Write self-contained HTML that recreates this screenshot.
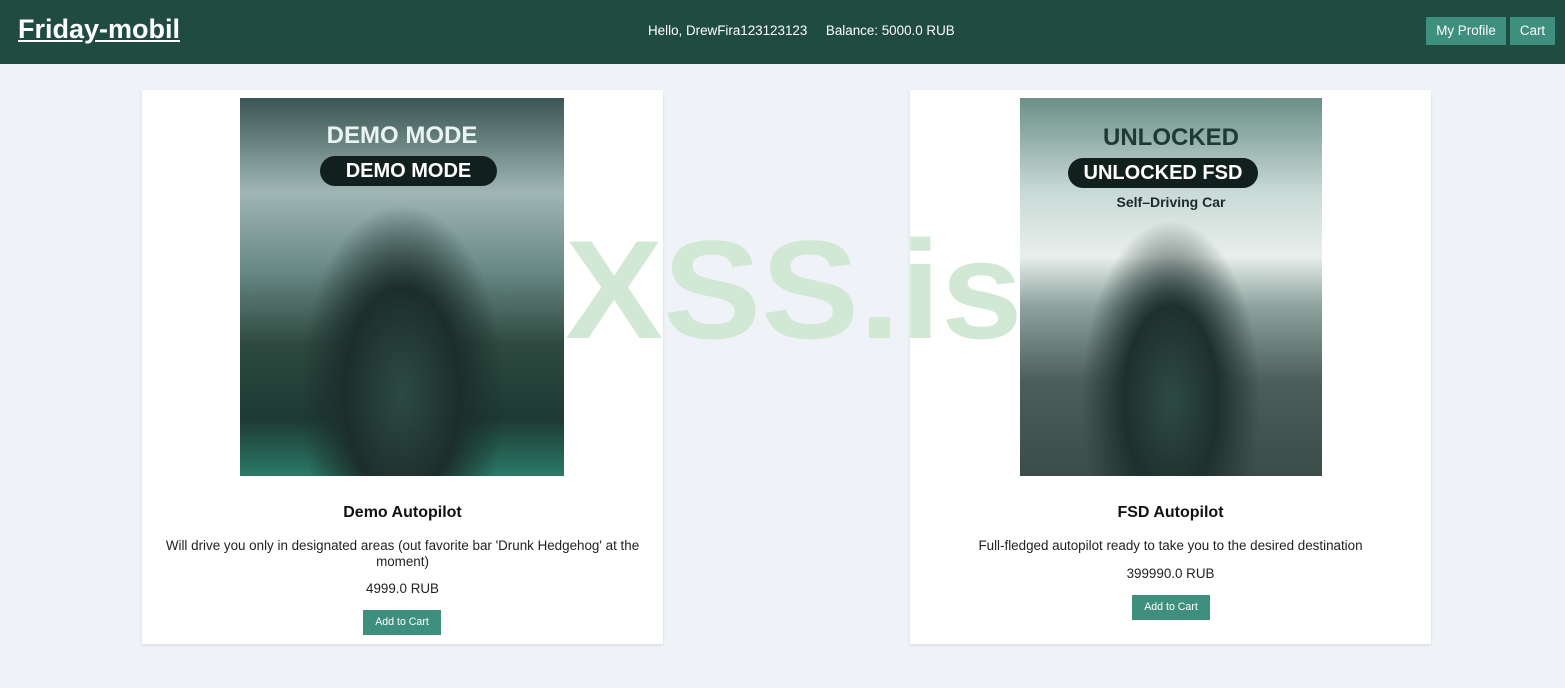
<!DOCTYPE html>
<html><head><meta charset="utf-8"><style>
*{margin:0;padding:0;box-sizing:border-box}
body{width:1565px;height:688px;background:#eff2f7;font-family:"Liberation Sans",Arial,sans-serif;position:relative;overflow:hidden}
.hdr{position:absolute;left:0;top:0;width:1565px;height:64px;background:#1f4b40}
.logo{position:absolute;left:18px;top:14px;color:#fff;font-size:27px;font-weight:bold;text-decoration:underline}
.hello{position:absolute;left:648px;top:23px;color:#fff;font-size:13.4px}
.btn{position:absolute;background:#3f8f7f;color:#fff;font-size:13.4px;text-align:center}
.card{position:absolute;top:90px;width:521px;height:554px;background:#fff;box-shadow:0 1px 3px rgba(0,0,0,.1);text-align:center}
.img{position:absolute;top:8px;height:378px}
h3{position:absolute;left:0;width:100%;font-size:16px;font-weight:bold;color:#111}
.d{position:absolute;left:0;width:100%;font-size:13.4px;color:#222;line-height:16px}
.cb{position:absolute;background:#3f8f7f;color:#fff;font-size:10.6px;height:25px;line-height:25px}
.wm{position:absolute;left:565px;top:220px;font-size:140px;font-weight:bold;color:#d0e8d4;line-height:1;transform:scaleX(1.05);transform-origin:0 0}
.it{position:absolute;left:0;width:100%;color:#fff;font-weight:bold}
</style></head><body>
<div class="hdr">
<div class="logo">Friday-mobil</div>
<div class="hello">Hello, DrewFira123123123 &nbsp;&nbsp;&nbsp;&nbsp;Balance: 5000.0 RUB</div>
<div class="btn" style="left:1426px;top:17px;width:80px;height:28px;line-height:28px">My Profile</div>
<div class="btn" style="left:1510px;top:17px;width:45px;height:28px;line-height:28px">Cart</div>
</div>
<div class="card" style="left:142px">
<div class="img" style="left:98px;width:324px;background:radial-gradient(ellipse at 50% 78%,#2d4a44 0,#1c2e2b 25%,transparent 45%),linear-gradient(180deg,#3a5553 0%,#9fb6b4 25%,#6b8a86 45%,#2e4a40 65%,#1d3a33 85%,#2a7a66 100%)">
<div class="it" style="top:24px;font-size:24px;color:#eaf5f2">DEMO MODE</div>
<div style="position:absolute;left:80px;top:58px;width:177px;height:30px;border-radius:15px;background:#11201d;color:#fff;font-weight:bold;font-size:20px;line-height:30px">DEMO MODE</div>
</div>
<h3 style="top:414px">Demo Autopilot</h3>
<div class="d" style="top:448px">Will drive you only in designated areas (out favorite bar 'Drunk Hedgehog' at the<br>moment)</div>
<div class="d" style="top:491px">4999.0 RUB</div>
<div class="cb" style="left:221px;top:520px;width:78px">Add to Cart</div>
</div>
<div class="card" style="left:910px">
<div class="img" style="left:110px;width:302px;background:radial-gradient(ellipse at 50% 80%,#2e4a44 0,#1e302d 22%,transparent 42%),linear-gradient(180deg,#6c8f88 0%,#c9dad6 25%,#e8efec 42%,#8ea39e 55%,#4b5e5a 75%,#3b4c49 100%)">
<div class="it" style="top:26px;font-size:24px;color:#1f3a34">UNLOCKED</div>
<div style="position:absolute;left:48px;top:60px;width:190px;height:30px;border-radius:15px;background:#11201d;color:#fff;font-weight:bold;font-size:20px;line-height:30px">UNLOCKED FSD</div>
<div class="it" style="top:96px;font-size:14px;color:#1f2a28">Self–Driving Car</div>
</div>
<h3 style="top:414px">FSD Autopilot</h3>
<div class="d" style="top:448px">Full-fledged autopilot ready to take you to the desired destination</div>
<div class="d" style="top:476px">399990.0 RUB</div>
<div class="cb" style="left:222px;top:505px;width:78px">Add to Cart</div>
</div>
<div class="wm">XSS.is</div>
</body></html>
